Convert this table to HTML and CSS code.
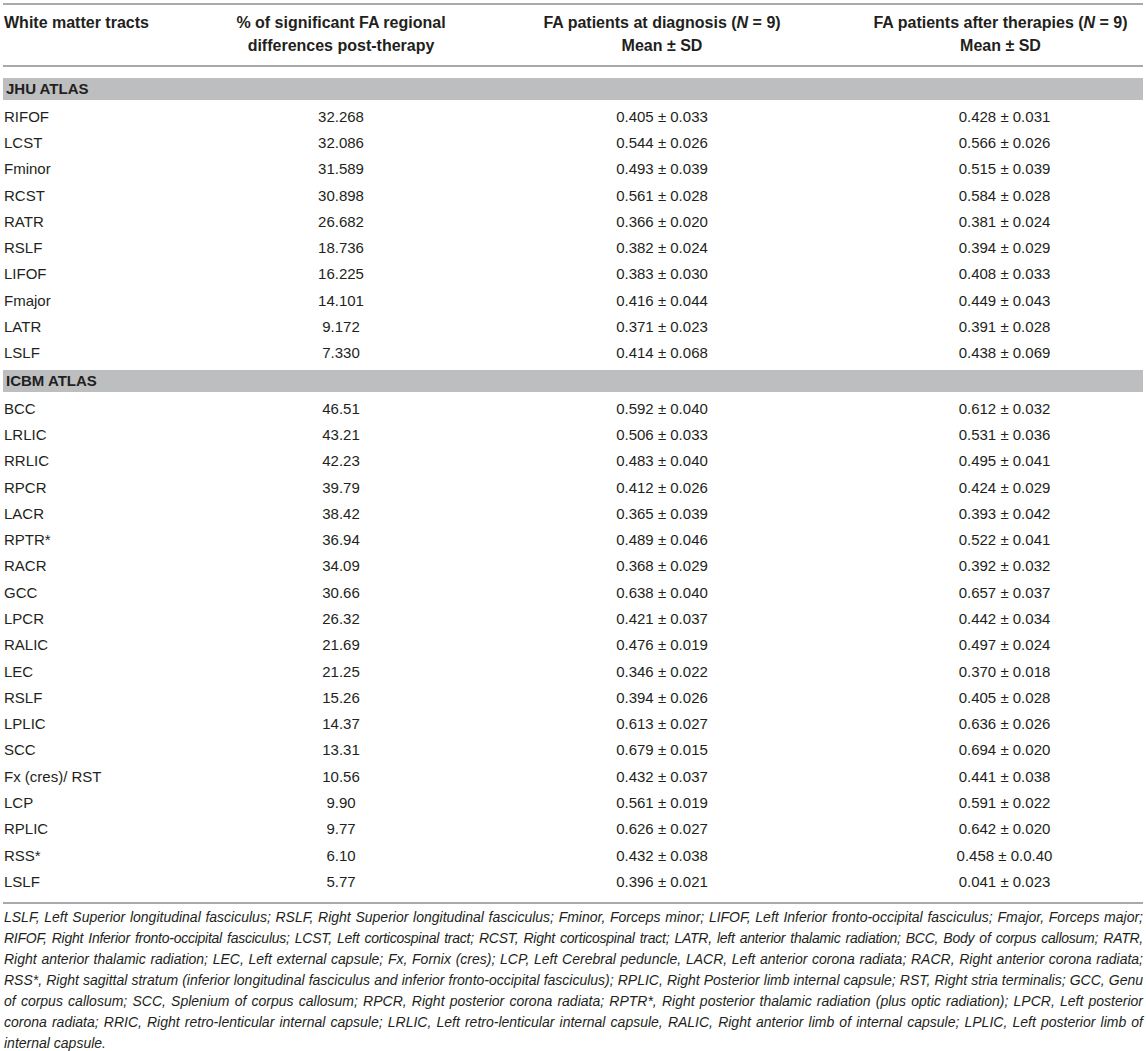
FILE: index.html
```html
<!DOCTYPE html>
<html lang="en">
<head>
<meta charset="utf-8">
<title>White matter tracts FA table</title>
<link rel="stylesheet" href="styles.css">
</head>
<body>
<div class="page">
  <div class="row head">
    <div class="c1">White matter tracts</div>
    <div class="c2">% of significant FA regional<br>differences post-therapy</div>
    <div class="c3">FA patients at diagnosis (<i>N</i> = 9)<br>Mean ± SD</div>
    <div class="c4">FA patients after therapies (<i>N</i> = 9)<br>Mean ± SD</div>
  </div>

  <div class="section first">JHU ATLAS</div>
  <div class="row"><div class="c1">RIFOF</div><div class="c2">32.268</div><div class="c3">0.405 ± 0.033</div><div class="c4">0.428 ± 0.031</div></div>
  <div class="row"><div class="c1">LCST</div><div class="c2">32.086</div><div class="c3">0.544 ± 0.026</div><div class="c4">0.566 ± 0.026</div></div>
  <div class="row"><div class="c1">Fminor</div><div class="c2">31.589</div><div class="c3">0.493 ± 0.039</div><div class="c4">0.515 ± 0.039</div></div>
  <div class="row"><div class="c1">RCST</div><div class="c2">30.898</div><div class="c3">0.561 ± 0.028</div><div class="c4">0.584 ± 0.028</div></div>
  <div class="row"><div class="c1">RATR</div><div class="c2">26.682</div><div class="c3">0.366 ± 0.020</div><div class="c4">0.381 ± 0.024</div></div>
  <div class="row"><div class="c1">RSLF</div><div class="c2">18.736</div><div class="c3">0.382 ± 0.024</div><div class="c4">0.394 ± 0.029</div></div>
  <div class="row"><div class="c1">LIFOF</div><div class="c2">16.225</div><div class="c3">0.383 ± 0.030</div><div class="c4">0.408 ± 0.033</div></div>
  <div class="row"><div class="c1">Fmajor</div><div class="c2">14.101</div><div class="c3">0.416 ± 0.044</div><div class="c4">0.449 ± 0.043</div></div>
  <div class="row"><div class="c1">LATR</div><div class="c2">9.172</div><div class="c3">0.371 ± 0.023</div><div class="c4">0.391 ± 0.028</div></div>
  <div class="row"><div class="c1">LSLF</div><div class="c2">7.330</div><div class="c3">0.414 ± 0.068</div><div class="c4">0.438 ± 0.069</div></div>

  <div class="section">ICBM ATLAS</div>
  <div class="row"><div class="c1">BCC</div><div class="c2">46.51</div><div class="c3">0.592 ± 0.040</div><div class="c4">0.612 ± 0.032</div></div>
  <div class="row"><div class="c1">LRLIC</div><div class="c2">43.21</div><div class="c3">0.506 ± 0.033</div><div class="c4">0.531 ± 0.036</div></div>
  <div class="row"><div class="c1">RRLIC</div><div class="c2">42.23</div><div class="c3">0.483 ± 0.040</div><div class="c4">0.495 ± 0.041</div></div>
  <div class="row"><div class="c1">RPCR</div><div class="c2">39.79</div><div class="c3">0.412 ± 0.026</div><div class="c4">0.424 ± 0.029</div></div>
  <div class="row"><div class="c1">LACR</div><div class="c2">38.42</div><div class="c3">0.365 ± 0.039</div><div class="c4">0.393 ± 0.042</div></div>
  <div class="row"><div class="c1">RPTR*</div><div class="c2">36.94</div><div class="c3">0.489 ± 0.046</div><div class="c4">0.522 ± 0.041</div></div>
  <div class="row"><div class="c1">RACR</div><div class="c2">34.09</div><div class="c3">0.368 ± 0.029</div><div class="c4">0.392 ± 0.032</div></div>
  <div class="row"><div class="c1">GCC</div><div class="c2">30.66</div><div class="c3">0.638 ± 0.040</div><div class="c4">0.657 ± 0.037</div></div>
  <div class="row"><div class="c1">LPCR</div><div class="c2">26.32</div><div class="c3">0.421 ± 0.037</div><div class="c4">0.442 ± 0.034</div></div>
  <div class="row"><div class="c1">RALIC</div><div class="c2">21.69</div><div class="c3">0.476 ± 0.019</div><div class="c4">0.497 ± 0.024</div></div>
  <div class="row"><div class="c1">LEC</div><div class="c2">21.25</div><div class="c3">0.346 ± 0.022</div><div class="c4">0.370 ± 0.018</div></div>
  <div class="row"><div class="c1">RSLF</div><div class="c2">15.26</div><div class="c3">0.394 ± 0.026</div><div class="c4">0.405 ± 0.028</div></div>
  <div class="row"><div class="c1">LPLIC</div><div class="c2">14.37</div><div class="c3">0.613 ± 0.027</div><div class="c4">0.636 ± 0.026</div></div>
  <div class="row"><div class="c1">SCC</div><div class="c2">13.31</div><div class="c3">0.679 ± 0.015</div><div class="c4">0.694 ± 0.020</div></div>
  <div class="row"><div class="c1">Fx (cres)/ RST</div><div class="c2">10.56</div><div class="c3">0.432 ± 0.037</div><div class="c4">0.441 ± 0.038</div></div>
  <div class="row"><div class="c1">LCP</div><div class="c2">9.90</div><div class="c3">0.561 ± 0.019</div><div class="c4">0.591 ± 0.022</div></div>
  <div class="row"><div class="c1">RPLIC</div><div class="c2">9.77</div><div class="c3">0.626 ± 0.027</div><div class="c4">0.642 ± 0.020</div></div>
  <div class="row"><div class="c1">RSS*</div><div class="c2">6.10</div><div class="c3">0.432 ± 0.038</div><div class="c4">0.458 ± 0.0.40</div></div>
  <div class="row last"><div class="c1">LSLF</div><div class="c2">5.77</div><div class="c3">0.396 ± 0.021</div><div class="c4">0.041 ± 0.023</div></div>

  <div class="notes">
    <span class="line">LSLF, Left Superior longitudinal fasciculus; RSLF, Right Superior longitudinal fasciculus; Fminor, Forceps minor; LIFOF, Left Inferior fronto-occipital fasciculus; Fmajor, Forceps major;</span>
    <span class="line tight">RIFOF, Right Inferior fronto-occipital fasciculus; LCST, Left corticospinal tract; RCST, Right corticospinal tract; LATR, left anterior thalamic radiation; BCC, Body of corpus callosum; RATR,</span>
    <span class="line">Right anterior thalamic radiation; LEC, Left external capsule; Fx, Fornix (cres); LCP, Left Cerebral peduncle, LACR, Left anterior corona radiata; RACR, Right anterior corona radiata;</span>
    <span class="line">RSS*, Right sagittal stratum (inferior longitudinal fasciculus and inferior fronto-occipital fasciculus); RPLIC, Right Posterior limb internal capsule; RST, Right stria terminalis; GCC, Genu</span>
    <span class="line">of corpus callosum; SCC, Splenium of corpus callosum; RPCR, Right posterior corona radiata; RPTR*, Right posterior thalamic radiation (plus optic radiation); LPCR, Left posterior</span>
    <span class="line">corona radiata; RRIC, Right retro-lenticular internal capsule; LRLIC, Left retro-lenticular internal capsule, RALIC, Right anterior limb of internal capsule; LPLIC, Left posterior limb of</span>
    <span class="line end">internal capsule.</span>
  </div>
</div>
</body>
</html>
```

FILE: styles.css
```css
html, body {
  margin: 0;
  padding: 0;
  background: #ffffff;
}

body {
  font-family: "Liberation Sans", Arial, Helvetica, sans-serif;
  color: #231f20;
  font-size: 15px;
}

.page {
  padding: 3px 3px 0 3px;
  width: 1140px;
}

.row {
  display: grid;
  grid-template-columns: 177px 322px 320px 321px;
  height: 26.3px;
  align-items: center;
  line-height: 17px;
}

.row .c1 {
  padding-left: 1px;
}

.row .c2,
.row .c3,
.row .c4 {
  text-align: center;
}

.row .c4 {
  padding-left: 44px;
}

.head {
  height: auto;
  border-top: 2px solid #a7a9ac;
  border-bottom: 2px solid #a7a9ac;
  padding: 6px 0 8px;
  align-items: start;
  font-weight: bold;
  font-size: 16px;
  line-height: 23px;
}

.head .c4 {
  padding-left: 36px;
}

.section {
  background: #bcbec0;
  height: 22px;
  line-height: 22px;
  font-weight: bold;
  font-size: 15px;
  padding-left: 3px;
  margin: 4px 0 3px;
}

.section.first {
  margin-top: 11px;
}

.row.last {
  margin-bottom: 7px;
}

.notes {
  border-top: 2px solid #a7a9ac;
  padding-top: 3px;
  font-style: italic;
  font-size: 14px;
  line-height: 21px;
}

.notes .line {
  display: block;
  text-align: justify;
  text-align-last: justify;
  white-space: nowrap;
  padding-left: 1px;
}

.notes .line.tight {
  letter-spacing: -0.25px;
}

.notes .line.end {
  text-align-last: left;
}
```
